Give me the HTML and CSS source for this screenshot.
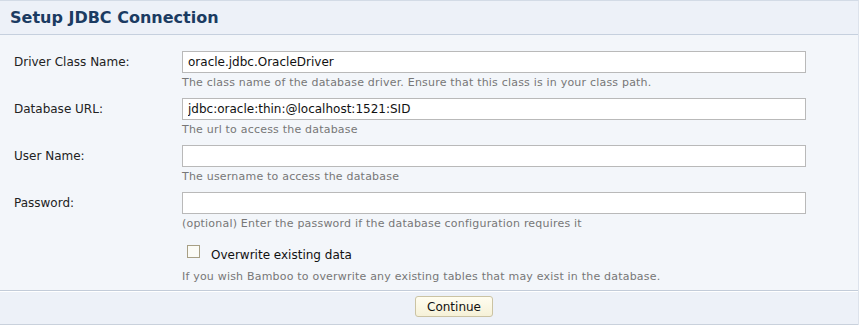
FILE: index.html
```html
<!DOCTYPE html>
<html>
<head>
<meta charset="utf-8">
<title>Setup JDBC Connection</title>
<link rel="stylesheet" href="styles.css">
</head>
<body>
<div class="panel">
  <div class="panel-header">
    <h2 class="panel-title">Setup JDBC Connection</h2>
  </div>
  <form class="panel-body">
    <div class="field-row">
      <label class="field-label">Driver Class Name:</label>
      <div class="field">
        <input class="text-input" type="text" value="oracle.jdbc.OracleDriver">
        <div class="field-desc">The class name of the database driver. Ensure that this class is in your class path.</div>
      </div>
    </div>
    <div class="field-row">
      <label class="field-label">Database URL:</label>
      <div class="field">
        <input class="text-input" type="text" value="jdbc:oracle:thin:@localhost:1521:SID">
        <div class="field-desc">The url to access the database</div>
      </div>
    </div>
    <div class="field-row">
      <label class="field-label">User Name:</label>
      <div class="field">
        <input class="text-input" type="text" value="">
        <div class="field-desc">The username to access the database</div>
      </div>
    </div>
    <div class="field-row">
      <label class="field-label">Password:</label>
      <div class="field">
        <input class="text-input" type="password" value="">
        <div class="field-desc">(optional) Enter the password if the database configuration requires it</div>
      </div>
    </div>
    <div class="field-row">
      <div class="field-label"></div>
      <div class="field">
        <label class="check-line"><span class="checkbox"></span><span class="check-text">Overwrite existing data</span></label>
        <div class="field-desc">If you wish Bamboo to overwrite any existing tables that may exist in the database.</div>
      </div>
    </div>
  </form>
  <div class="panel-footer">
    <button class="btn" type="button">Continue</button>
  </div>
</div>
</body>
</html>
```
FILE: styles.css
```css
* { box-sizing: border-box; }
html, body {
  margin: 0;
  padding: 0;
  background: #ffffff;
}
body {
  font-family: "DejaVu Sans", Verdana, sans-serif;
  font-size: 12px;
  color: #222;
}
.panel {
  width: 859px;
  height: 325px;
  background: #f3f6fa;
  border-top: 1px solid #d3dbe6;
  border-right: 1px solid #dde3ec;
  display: flex;
  flex-direction: column;
}
.panel-header {
  height: 34px;
  background: #edf1f8;
  border-bottom: 1px solid #c6d0de;
  padding-left: 10px;
  display: flex;
  align-items: center;
}
.panel-title {
  margin: 0;
  font-size: 16px;
  font-weight: bold;
  color: #1b3b62;
}
.panel-body {
  margin: 0;
  padding: 16px 0 0 0;
  display: flex;
  flex-direction: column;
  gap: 7px;
  height: 254px;
}
.field-row {
  display: grid;
  grid-template-columns: 182px 624px;
}
.field-label {
  padding-left: 14px;
  line-height: 22px;
  color: #222;
}
.field {
  display: flex;
  flex-direction: column;
}
.text-input {
  height: 22px;
  width: 624px;
  margin: 0;
  padding: 0 5px;
  border: 1px solid #b9b9b9;
  background: #fff;
  font-family: "DejaVu Sans", Verdana, sans-serif;
  font-size: 12px;
  color: #111;
  outline: none;
}
.field-desc {
  line-height: 16px;
  padding-top: 2px;
  font-size: 11px;
  color: #777;
  letter-spacing: 0.2px;
}
.check-line {
  display: flex;
  align-items: center;
  height: 28px;
  padding-top: 4px;
  padding-left: 5px;
}
.checkbox {
  width: 13px;
  height: 13px;
  border: 1px solid #a79f84;
  background: #fbfbf6;
  margin-top: -7px;
}
.check-text {
  margin-left: 11px;
  color: #111;
}
.panel-footer {
  height: 35px;
  margin-top: auto;
  background: #edf1f8;
  border-top: 1px solid #c3ccd9;
  box-shadow: inset 0 1px 0 #ffffff;
  border-bottom: 1px solid #c9d1dc;
  display: flex;
  align-items: flex-start;
  padding-top: 5px;
  padding-left: 415px;
}
.btn {
  width: 78px;
  height: 21px;
  padding: 0;
  border: 1px solid #cbc3a3;
  border-radius: 3px;
  background: linear-gradient(#fffdf0, #f6f1d8);
  font-family: "DejaVu Sans", Verdana, sans-serif;
  font-size: 12px;
  color: #111;
}
```
